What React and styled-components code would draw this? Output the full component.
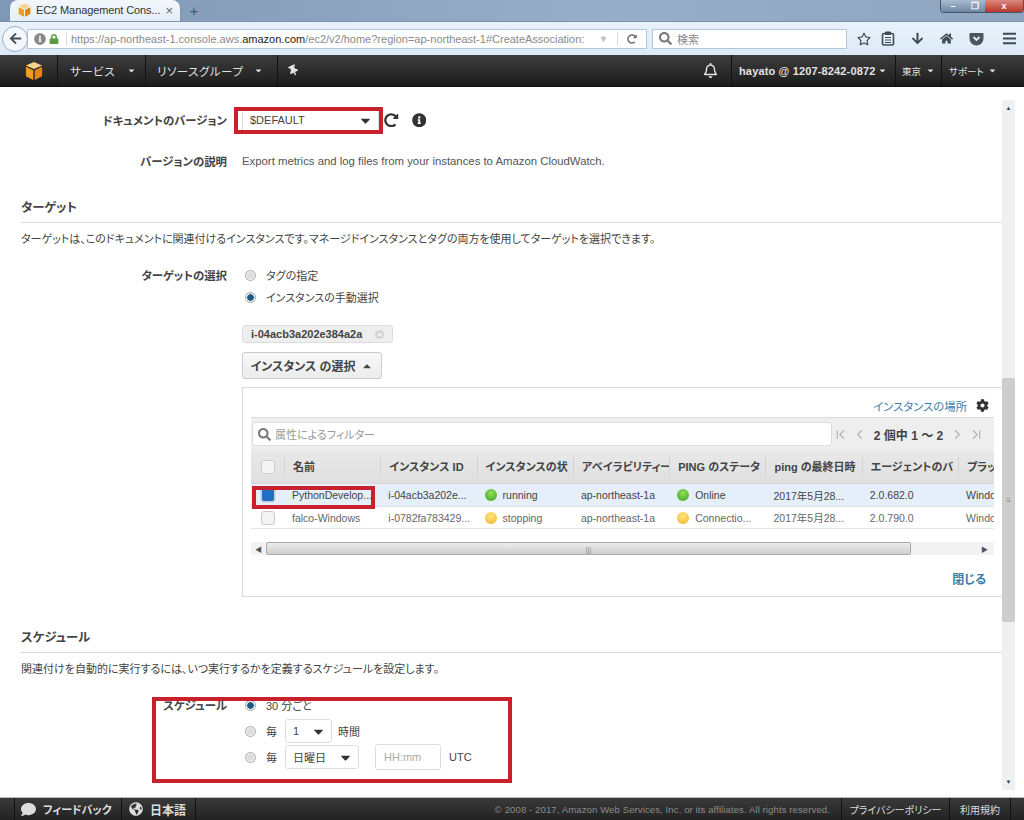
import React from 'react';
import styled, { createGlobalStyle } from 'styled-components';
import {
  FaArrowLeft, FaBars, FaCaretDown, FaCaretUp, FaCog, FaComment, FaGlobeAmericas, FaHome,
  FaInfoCircle, FaLock, FaArrowDown, FaRegBell, FaRegStar, FaSearch, FaThumbtack, FaRedoAlt,
} from 'react-icons/fa';
import { ChevronFirst, ChevronLast, ChevronLeft, ChevronRight } from 'lucide-react';

const Global = createGlobalStyle`
  html, body { margin: 0; padding: 0; background: #fff; }
  body {
    font-family: "Liberation Sans", "Noto Sans CJK JP", sans-serif;
    font-size: 11px;
    color: #444;
    font-feature-settings: "palt";
  }
  * { box-sizing: border-box; }
`;

const Page = styled.div`
  position: relative;
  width: 1024px;
  height: 820px;
  display: flex;
  flex-direction: column;
  overflow: hidden;
`;

/* browser chrome */
const TabStrip = styled.div`
  height: 22px;
  flex: none;
  padding-left: 10px;
  display: flex;
  align-items: flex-end;
  justify-content: space-between;
  background: linear-gradient(90deg, #7f97b6, #98aec8 60%, #8ea4bf);
  border-bottom: 1px solid #7d91a9;
`;
const TabGroup = styled.div`
  display: flex;
  align-items: center;
  height: 22px;
`;
const Tab = styled.div`
  width: 170px;
  height: 21px;
  display: flex;
  align-items: center;
  gap: 5px;
  padding: 0 8px;
  font-size: 11px;
  color: #333;
  background: linear-gradient(#f3f7fb, #e4eef8);
  border-radius: 8px 8px 0 0;
  box-shadow: 0 0 0 1px #8096ae;
  svg { flex: none; }
`;
const TabTitle = styled.span`
  flex: 1;
  white-space: nowrap;
  letter-spacing: -0.1px;
`;
const TabClose = styled.span`
  color: #666;
  font-size: 13px;
`;
const NewTab = styled.span`
  width: 28px;
  text-align: center;
  color: #44576e;
  font-size: 15px;
`;
const WinButtons = styled.div`
  display: flex;
  align-self: flex-start;
  height: 13px;
  border: 1px solid #44566c;
  border-top: 0;
  border-radius: 0 0 4px 4px;
  overflow: hidden;
`;
const WinButton = styled.span`
  width: ${p => p.$w}px;
  display: flex;
  align-items: center;
  justify-content: center;
  color: #fff;
  font-size: 9px;
  font-weight: bold;
  line-height: 1;
  background: ${p => p.$close ? 'linear-gradient(#d98a7c, #b9362b)' : 'linear-gradient(#a9bbcf, #6f87a3)'};
`;
const NavBar = styled.div`
  height: 33px;
  flex: none;
  display: flex;
  align-items: center;
  padding-left: 2px;
  background: linear-gradient(#e9f2fb, #dceaf7);
`;
const BackButton = styled.div`
  width: 26px;
  height: 26px;
  flex: none;
  margin-right: -1px;
  z-index: 1;
  border-radius: 50%;
  border: 1px solid #9db0c4;
  background: #f4f8fc;
  color: #444f5c;
  font-size: 13px;
  display: flex;
  align-items: center;
  justify-content: center;
`;
const UrlBox = styled.div`
  width: 620px;
  height: 20px;
  display: flex;
  align-items: center;
  padding-left: 5px;
  background: #fff;
  border: 1px solid #b5c6d8;
  font-size: 11px;
  color: #8a8a8a;
  white-space: nowrap;
`;
const UrlIcons = styled.div`
  width: 34px;
  height: 14px;
  flex: none;
  display: flex;
  align-items: center;
  gap: 3px;
  padding-left: 1px;
  border-right: 1px solid #ddd;
  margin-right: 4px;
  color: #5a9a3a;
  font-size: 10px;
`;
const InfoGlyph = styled(FaInfoCircle)`
  color: #888;
  font-size: 12px;
`;
const UrlText = styled.span`
  flex: 1;
  b { color: #222; font-weight: normal; }
`;
const UrlDrop = styled.span`
  width: 19px;
  height: 14px;
  line-height: 14px;
  color: #bbb;
  font-size: 9px;
  border-right: 1px solid #ddd;
`;
const UrlReload = styled(FaRedoAlt)`
  color: #777;
  font-size: 10px;
  margin: 0 9px;
`;
const SearchBox = styled.div`
  width: 195px;
  height: 20px;
  margin-left: 5px;
  display: flex;
  align-items: center;
  gap: 5px;
  padding-left: 6px;
  background: #fff;
  border: 1px solid #b5c6d8;
  color: #888;
  font-size: 11px;
`;
const NavIcons = styled.div`
  display: flex;
  align-items: center;
  flex: 1;
  height: 33px;
  color: #3f4a55;
`;
const NavIcon = styled.span`
  width: ${p => p.$w}px;
  display: flex;
  justify-content: center;
  font-size: ${p => p.$size || 14}px;
`;

/* console bars */
const ConsoleBar = styled.div`
  height: 32px;
  flex: none;
  display: flex;
  align-items: center;
  justify-content: space-between;
  background: linear-gradient(#3d3d3d, #1c1c1c);
  color: #e2e2e2;
  border-bottom: 1px solid #111;
`;
const BarGroup = styled.div`
  display: flex;
  align-items: center;
  height: 100%;
`;
const BarItem = styled.div`
  height: 100%;
  display: flex;
  align-items: center;
  justify-content: ${p => p.$center ? 'center' : 'flex-start'};
  gap: ${p => p.$gap ?? 6}px;
  width: ${p => p.$w ? `${p.$w}px` : 'auto'};
  padding: ${p => p.$pad || '0'};
  border-left: ${p => p.$line ? '1px solid #111' : '0'};
  white-space: nowrap;
  font-size: ${p => p.$size || 11}px;
  font-weight: ${p => p.$bold ? 'bold' : 'normal'};
  letter-spacing: ${p => p.$track || 0}px;
`;
const Caret = styled(FaCaretDown)`
  font-size: 9px;
  color: #ddd;
`;
const PinIcon = styled(FaThumbtack)`
  transform: rotate(-25deg);
`;
const Footer = styled.div`
  height: 23px;
  flex: none;
  display: flex;
  align-items: center;
  justify-content: space-between;
  background: linear-gradient(#3a3a3a, #222);
  border-top: 1px solid #bbb;
  color: #ddd;
`;
const FooterCopy = styled.span`
  color: #8b8b8b;
  font-size: 9.6px;
  letter-spacing: 0.08px;
  margin-right: 11px;
`;

/* page body */
const Main = styled.div`
  flex: 1;
  min-height: 0;
  display: flex;
`;
const Content = styled.div`
  flex: 1;
  min-width: 0;
  padding: 20px 0 0 21px;
`;
const FormRow = styled.div`
  display: grid;
  grid-template-columns: 206px 1fr;
  column-gap: 15px;
  margin-top: ${p => p.$top || 0}px;
`;
const Label = styled.div`
  height: ${p => p.$line || 26}px;
  text-align: right;
  font-weight: bold;
  font-size: 11.4px;
  color: #444;
  padding-top: 1px;
  line-height: ${p => p.$line || 26}px;
`;
const Inline = styled.div`
  display: flex;
  align-items: center;
  height: ${p => p.$h || 26}px;
  margin-bottom: ${p => p.$after || 0}px;
`;
const BodyText = styled.span`
  font-size: 11.35px;
  color: #555;
`;
const SectionHead = styled.div`
  height: 27px;
  margin-top: ${p => p.$top}px;
  padding-top: 2px;
  border-bottom: 1px solid #ddd;
  font-size: 12.4px;
  font-weight: bold;
  color: #444;
`;
const SectionDesc = styled.div`
  margin-top: 8px;
  line-height: 16px;
  font-size: 11px;
  color: #444;
`;
const SelectBox = styled.div`
  width: ${p => p.$w}px;
  height: ${p => p.$h || 24}px;
  flex: none;
  display: flex;
  align-items: center;
  justify-content: space-between;
  padding: 0 5px 0 7px;
  font-size: 11px;
  color: #444;
  background: #fff;
  border: 1px solid #ddd;
  border-radius: 3px;
`;
const CaretBig = styled(FaCaretDown)`
  font-size: 15px;
  color: #333;
`;
const VersionIcons = styled.div`
  display: flex;
  align-items: center;
  gap: 13px;
  margin-left: 5px;
  color: #333;
  font-size: 14.5px;
`;
const Radio = styled.span`
  width: 11px;
  height: 11px;
  flex: none;
  margin: 0 10px 0 3px;
  border-radius: 50%;
  border: 1px solid #aaa;
  background: ${p => p.$on
    ? 'radial-gradient(circle, #1d5a8a 0 3px, #e8e8e8 3.5px)'
    : 'radial-gradient(circle, #ddd 0 3px, #f1f1f1 4px)'};
`;
const Chip = styled.div`
  width: 151px;
  height: 18px;
  margin-top: 17px;
  display: flex;
  align-items: center;
  justify-content: space-between;
  padding: 0 8px;
  background: #eee;
  border: 1px solid #ddd;
  border-radius: 3px;
  font-size: 11px;
  font-weight: bold;
  color: #444;
`;
const ChipClose = styled.span`
  width: 9px;
  height: 9px;
  border-radius: 50%;
  background: #d5d5d5;
  color: #fff;
  font-size: 8px;
  line-height: 9px;
  text-align: center;
`;
const ToggleButton = styled.div`
  width: 140px;
  height: 27px;
  margin-top: 9px;
  display: flex;
  align-items: center;
  justify-content: center;
  gap: 6px;
  font-size: 12px;
  font-weight: bold;
  color: #444;
  background: linear-gradient(#f8f8f8, #ececec);
  border: 1px solid #ccc;
  border-radius: 3px;
`;
const Panel = styled.div`
  height: 210px;
  margin-top: 8px;
  padding: 0 8px;
  border: 1px solid #ddd;
`;
const PanelTop = styled.div`
  height: 29px;
  display: flex;
  align-items: center;
  justify-content: flex-end;
  gap: 9px;
  padding: 6px 5px 0 0;
  color: #3b7ca8;
  font-size: 11.4px;
`;
const GearIcon = styled(FaCog)`
  color: #333;
  font-size: 13px;
`;
const FilterBar = styled.div`
  height: 33px;
  display: flex;
  align-items: center;
  background: #eee;
  border-top: 1px solid #ddd;
`;
const FilterInput = styled.div`
  width: 580px;
  height: 24px;
  margin-left: 1px;
  display: flex;
  align-items: center;
  gap: 4px;
  padding-left: 5px;
  font-size: 11px;
  color: #999;
  background: #fff;
  border: 1px solid #ddd;
  border-radius: 3px;
`;
const SearchGlyph = styled(FaSearch)`
  color: #777;
  font-size: 13px;
`;
const Pager = styled.div`
  flex: 1;
  display: flex;
  align-items: center;
  justify-content: space-between;
  padding: 0 10px 0 1px;
  color: #b5b5b5;
`;
const PagerGroup = styled.div`
  display: flex;
  align-items: center;
  gap: 4px;
`;
const PagerText = styled.span`
  font-size: 12px;
  font-weight: bold;
  color: #444;
`;
const TableRow = styled.div`
  display: grid;
  grid-template-columns: 33px repeat(7, 96.3px) 36px;
  align-items: center;
  overflow: hidden;
  height: ${p => p.$h}px;
  background: ${p => p.$bg};
  border-bottom: 1px solid ${p => p.$line || '#e5e5e5'};
`;
const HeadCell = styled.div`
  height: 19px;
  line-height: 20px;
  padding-left: 8px;
  white-space: nowrap;
  overflow: hidden;
  font-weight: bold;
  font-size: 11px;
  color: #444;
  border-left: 1px solid #d4d4d4;
`;
const Cell = styled.div`
  display: flex;
  align-items: center;
  gap: 6px;
  padding-left: ${p => p.$pad ?? 8}px;
  white-space: nowrap;
  overflow: hidden;
  font-size: 10.5px;
  color: ${p => p.$muted ? '#666' : '#444'};
`;
const BoxCell = styled.div`
  display: flex;
  justify-content: center;
`;
const Check = styled.span`
  width: 14px;
  height: 14px;
  border: 1px solid #ccc;
  border-radius: 3px;
  background: ${p => p.$on ? '#1f6fc4' : '#f4f4f4'};
  box-shadow: ${p => p.$on ? '0 0 0 1px #cfe0f2' : 'none'};
`;
const Dot = styled.span`
  width: 12px;
  height: 12px;
  flex: none;
  border-radius: 50%;
  background: ${p => p.$color === 'green'
    ? 'radial-gradient(circle at 50% 35%, #8fdc5c, #3fa51f)'
    : 'radial-gradient(circle at 50% 35%, #ffe680, #edb422)'};
`;
const HScroll = styled.div`
  height: 13px;
  margin-top: 13px;
  display: flex;
  align-items: center;
  background: #f3f3f3;
  color: #555;
`;
const ScrollEnd = styled.span`
  width: ${p => p.$w}px;
  display: flex;
  justify-content: ${p => p.$right ? 'flex-end' : 'center'};
  padding-right: ${p => p.$right ? 5 : 0}px;
  font-size: 7px;
`;
const HThumb = styled.div`
  width: 645px;
  height: 13px;
  text-align: center;
  font-size: 7px;
  line-height: 13px;
  color: #888;
  border: 1px solid #aaa;
  border-radius: 2px;
  background: linear-gradient(#ececec, #cfcfcf);
`;
const CloseLink = styled.div`
  margin-top: 15px;
  padding-right: 8px;
  text-align: right;
  font-size: 12px;
  font-weight: bold;
  color: #3b7ca8;
`;
const OptionText = styled.span`
  font-size: 11px;
  color: #444;
  margin-right: ${p => p.$gap || 0}px;
`;
const TimeInput = styled.div`
  width: 66px;
  height: 26px;
  margin: 0 8px 0 16px;
  display: flex;
  align-items: center;
  padding-left: 8px;
  font-size: 11px;
  color: #aaa;
  border: 1px solid #ddd;
  border-radius: 3px;
`;

/* page scrollbar */
const VScroll = styled.div`
  width: 13px;
  flex: none;
  margin: 13px 9px 7px 0;
  display: flex;
  flex-direction: column;
  align-items: center;
  background: #f0f0f0;
  color: #444;
  font-size: 6px;
`;
const VArrow = styled.span`
  height: 16px;
  line-height: 16px;
`;
const VThumb = styled.div`
  width: 13px;
  height: 244px;
  margin: 262px 0 auto;
  display: flex;
  align-items: center;
  justify-content: center;
  font-size: 8px;
  color: #888;
  background: #cdcdcd;
  border-radius: 2px;
`;

/* red annotation frames drawn over the screenshot */
const RedFrame = styled.div`
  position: absolute;
  left: ${p => p.$x}px;
  top: ${p => p.$y}px;
  width: ${p => p.$w}px;
  height: ${p => p.$h}px;
  border: 4px solid #c9202e;
  pointer-events: none;
`;

const CubeLogo = ({ size = 18 }) => (
  <svg width={size} height={size * 1.1} viewBox="0 0 20 22">
    <path d="M10 1 19 5 10 9 1 5z" fill="#fbd28a" />
    <path d="M1 6.5 9.2 10.2V21L1 17z" fill="#f29b1d" />
    <path d="M19 6.5 10.8 10.2V21L19 17z" fill="#e5860f" />
  </svg>
);

const PocketIcon = () => (
  <svg width="15" height="14" viewBox="0 0 15 14">
    <path d="M1.5 1h12A1 1 0 0 1 14.5 2v4.5a7 7 0 0 1-14 0V2a1 1 0 0 1 1-1z" fill="#4a5560" />
    <path d="M4.5 5 7.5 8 10.5 5" fill="none" stroke="#e4eef8" strokeWidth="1.8" />
  </svg>
);

const ReaderIcon = () => (
  <svg width="14" height="15" viewBox="0 0 14 15">
    <rect x="1.5" y="2.5" width="11" height="11.5" rx="1.5" fill="none" stroke="#3f4a55" strokeWidth="1.6" />
    <path d="M4.5 1h5v2.5h-5zM4 6.5h6M4 9h6M4 11.5h6" fill="#3f4a55" stroke="#3f4a55" />
  </svg>
);

const columns = ['名前', 'インスタンス ID', 'インスタンスの状', 'アベイラビリティー', 'PING のステータ', 'ping の最終日時', 'エージェントのバ', 'プラットフォーム'];

const rows = [
  { name: 'PythonDevelop...', id: 'i-04acb3a202e...', state: 'running', stateColor: 'green', ping: 'Online', pingColor: 'green', agent: '2.0.682.0', selected: true },
  { name: 'falco-Windows', id: 'i-0782fa783429...', state: 'stopping', stateColor: 'yellow', ping: 'Connectio...', pingColor: 'yellow', agent: '2.0.790.0' },
];

const InstanceTable = () => (
  <>
    <TableRow $h={34} $bg="linear-gradient(#e9e9e9, #dfdfdf)" $line="#d5d5d5">
      <BoxCell><Check /></BoxCell>
      {columns.map(c => <HeadCell key={c}>{c}</HeadCell>)}
    </TableRow>
    {rows.map(r => (
      <TableRow key={r.id} $h={r.selected ? 23 : 22} $bg={r.selected ? '#e5eff9' : '#fff'}>
        <BoxCell><Check $on={r.selected} /></BoxCell>
        <Cell $muted={!r.selected}>{r.name}</Cell>
        <Cell $muted={!r.selected}>{r.id}</Cell>
        <Cell $muted={!r.selected}><Dot $color={r.stateColor} />{r.state}</Cell>
        <Cell $muted={!r.selected}>ap-northeast-1a</Cell>
        <Cell $muted={!r.selected}><Dot $color={r.pingColor} />{r.ping}</Cell>
        <Cell $muted={!r.selected}>2017年5月28...</Cell>
        <Cell $muted={!r.selected}>{r.agent}</Cell>
        <Cell $muted={!r.selected}>Windows</Cell>
      </TableRow>
    ))}
  </>
);

export default function App() {
  return (
    <Page>
      <Global />
      <TabStrip>
        <TabGroup>
          <Tab>
            <CubeLogo size={13} />
            <TabTitle>EC2 Management Cons...</TabTitle>
            <TabClose>×</TabClose>
          </Tab>
          <NewTab>+</NewTab>
        </TabGroup>
        <WinButtons>
          <WinButton $w={24}>–</WinButton>
          <WinButton $w={20}>❐</WinButton>
          <WinButton $w={38} $close>x</WinButton>
        </WinButtons>
      </TabStrip>
      <NavBar>
        <BackButton><FaArrowLeft /></BackButton>
        <UrlBox>
          <UrlIcons><InfoGlyph /><FaLock /></UrlIcons>
          <UrlText>https://ap-northeast-1.console.aws.<b>amazon.com</b>/ec2/v2/home?region=ap-northeast-1#CreateAssociation:</UrlText>
          <UrlDrop>▼</UrlDrop>
          <UrlReload />
        </UrlBox>
        <SearchBox><SearchGlyph />検索</SearchBox>
        <NavIcons>
          <NavIcon $w={34}><FaRegStar /></NavIcon>
          <NavIcon $w={14}><ReaderIcon /></NavIcon>
          <NavIcon $w={44} $size={13}><FaArrowDown /></NavIcon>
          <NavIcon $w={14} $size={13}><FaHome /></NavIcon>
          <NavIcon $w={46}><PocketIcon /></NavIcon>
          <NavIcon $w={20} $size={15}><FaBars /></NavIcon>
        </NavIcons>
      </NavBar>
      <ConsoleBar>
        <BarGroup>
          <BarItem $w={57} $pad="0 0 0 25px"><CubeLogo size={18} /></BarItem>
          <BarItem $w={88} $line $pad="0 0 0 12px" $gap={12} $size={11.5} $track={0.5}>サービス<Caret /></BarItem>
          <BarItem $w={132} $line $pad="0 0 0 11px" $gap={11} $size={11.5} $track={0.5}>リソースグループ<Caret /></BarItem>
          <BarItem $w={32} $line $center><PinIcon /></BarItem>
        </BarGroup>
        <BarGroup>
          <BarItem $w={36} $center $pad="0 6px 0 0"><FaRegBell size={15} /></BarItem>
          <BarItem $w={164} $line $pad="0 0 0 7px" $gap={3} $bold $track={0.15}>hayato @ 1207-8242-0872<Caret /></BarItem>
          <BarItem $w={46} $line $pad="0 0 0 6px" $gap={5} $size={9.5}>東京<Caret /></BarItem>
          <BarItem $w={83} $line $pad="0 0 0 7px" $gap={4} $size={9.5}>サポート<Caret /></BarItem>
        </BarGroup>
      </ConsoleBar>
      <Main>
        <Content>
          <FormRow>
            <Label>ドキュメントのバージョン</Label>
            <Inline>
              <SelectBox $w={137}>$DEFAULT<CaretBig /></SelectBox>
              <VersionIcons><FaRedoAlt /><FaInfoCircle /></VersionIcons>
            </Inline>
          </FormRow>
          <FormRow $top={15}>
            <Label>バージョンの説明</Label>
            <Inline><BodyText>Export metrics and log files from your instances to Amazon CloudWatch.</BodyText></Inline>
          </FormRow>
          <SectionHead $top={22}>ターゲット</SectionHead>
          <SectionDesc>ターゲットは、このドキュメントに関連付けるインスタンスです。マネージドインスタンスとタグの両方を使用してターゲットを選択できます。</SectionDesc>
          <FormRow $top={17}>
            <Label $line="22">ターゲットの選択</Label>
            <div>
              <Inline $h={22}><Radio /><OptionText>タグの指定</OptionText></Inline>
              <Inline $h={22}><Radio $on /><OptionText>インスタンスの手動選択</OptionText></Inline>
              <Chip>i-04acb3a202e384a2a<ChipClose>×</ChipClose></Chip>
              <ToggleButton>インスタンス の選択<FaCaretUp /></ToggleButton>
              <Panel>
                <PanelTop>インスタンスの場所<GearIcon /></PanelTop>
                <FilterBar>
                  <FilterInput><SearchGlyph />属性によるフィルター</FilterInput>
                  <Pager>
                    <PagerGroup><ChevronFirst size={15} /><ChevronLeft size={15} /></PagerGroup>
                    <PagerText>2 個中 1 ～ 2</PagerText>
                    <PagerGroup><ChevronRight size={15} /><ChevronLast size={15} /></PagerGroup>
                  </Pager>
                </FilterBar>
                <InstanceTable />
                <HScroll>
                  <ScrollEnd $w={15}>◀</ScrollEnd>
                  <HThumb>|||</HThumb>
                  <ScrollEnd $w={82} $right>▶</ScrollEnd>
                </HScroll>
                <CloseLink>閉じる</CloseLink>
              </Panel>
            </div>
          </FormRow>
          <SectionHead $top={29}>スケジュール</SectionHead>
          <SectionDesc>関連付けを自動的に実行するには、いつ実行するかを定義するスケジュールを設定します。</SectionDesc>
          <FormRow $top={17}>
            <Label $line="22">スケジュール</Label>
            <div>
              <Inline $h={22} $after={2}><Radio $on /><OptionText>30 分ごと</OptionText></Inline>
              <Inline>
                <Radio /><OptionText $gap={8}>毎</OptionText>
                <SelectBox $w={47}>1<CaretBig /></SelectBox>
                <OptionText>&nbsp;&nbsp;時間</OptionText>
              </Inline>
              <Inline>
                <Radio /><OptionText $gap={8}>毎</OptionText>
                <SelectBox $w={74}>日曜日<CaretBig /></SelectBox>
                <TimeInput>HH:mm</TimeInput>
                <OptionText>UTC</OptionText>
              </Inline>
            </div>
          </FormRow>
        </Content>
        <VScroll>
          <VArrow>▲</VArrow>
          <VThumb>≡</VThumb>
          <VArrow>▼</VArrow>
        </VScroll>
      </Main>
      <Footer>
        <BarGroup>
          <BarItem $w={14} />
          <BarItem $w={107} $line $pad="0 0 0 6px" $gap={7} $bold><FaComment size={15} />フィードバック</BarItem>
          <BarItem $w={74} $line $pad="0 0 0 7px" $gap={7} $bold $size={12}><FaGlobeAmericas size={14} />日本語</BarItem>
          <BarItem $line />
        </BarGroup>
        <BarGroup>
          <FooterCopy>© 2008 - 2017, Amazon Web Services, Inc. or its affiliates. All rights reserved.</FooterCopy>
          <BarItem $w={108} $line $center $size={10}>プライバシーポリシー</BarItem>
          <BarItem $w={61} $line $center $size={10}>利用規約</BarItem>
          <BarItem $w={14} $line />
        </BarGroup>
      </Footer>
      <RedFrame $x={234} $y={107} $w={149} $h={27} />
      <RedFrame $x={252} $y={486} $w={123} $h={23} />
      <RedFrame $x={152} $y={697} $w={360} $h={86} />
    </Page>
  );
}
